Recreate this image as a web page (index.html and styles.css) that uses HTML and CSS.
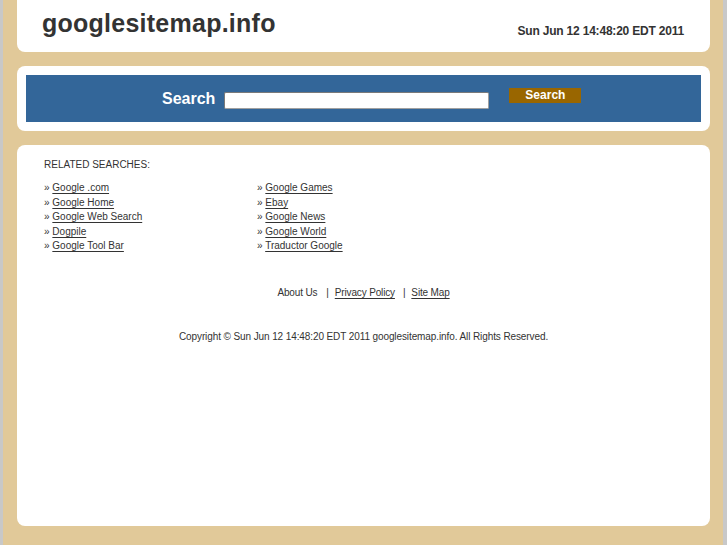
FILE: index.html
```html
<!DOCTYPE html>
<html lang="en">
<head>
  <title>googlesitemap.info</title>
  <meta charset="utf-8">
  <link rel="stylesheet" href="styles.css">
</head>
<body>
  <div class="page">
    <header class="header">
      <h1 class="logo">googlesitemap.info</h1>
      <div class="date">Sun Jun 12 14:48:20 EDT 2011</div>
    </header>

    <div class="search-box">
      <form class="search-bar">
        <label class="search-label" for="q">Search</label>
        <input class="search-input" id="q" type="text">
        <button class="search-button" type="button">Search</button>
      </form>
    </div>

    <main class="content">
      <h2 class="related-title">RELATED SEARCHES:</h2>
      <ul class="related">
        <li>&raquo; <a href="#">Google .com</a></li>
        <li>&raquo; <a href="#">Google Games</a></li>
        <li>&raquo; <a href="#">Google Home</a></li>
        <li>&raquo; <a href="#">Ebay</a></li>
        <li>&raquo; <a href="#">Google Web Search</a></li>
        <li>&raquo; <a href="#">Google News</a></li>
        <li>&raquo; <a href="#">Dogpile</a></li>
        <li>&raquo; <a href="#">Google World</a></li>
        <li>&raquo; <a href="#">Google Tool Bar</a></li>
        <li>&raquo; <a href="#">Traductor Google</a></li>
      </ul>

      <p class="footer-links">
        <span class="plain">About Us</span>
        <span class="sep sep-first">|</span>
        <a href="#">Privacy Policy</a>
        <span class="sep">|</span>
        <a href="#">Site Map</a>
      </p>
      <p class="copyright">Copyright &copy; Sun Jun 12 14:48:20 EDT 2011 googlesitemap.info. All Rights Reserved.</p>
    </main>
  </div>
</body>
</html>
```

FILE: styles.css
```css
*, *::before, *::after {
  margin: 0;
  padding: 0;
  box-sizing: border-box;
}

body {
  background-color: #C8C8C8;
  color: #333333;
  font-family: "Liberation Sans", Arial, sans-serif;
}

a {
  color: #333333;
  text-underline-offset: 2px;
}

.page {
  min-height: 545px;
  margin: 0 4px 0 3px;
  padding: 0 13px 19px 14px;
  background-color: #E1C999;
}

.header {
  display: flex;
  justify-content: space-between;
  height: 52px;
  padding: 0 26px 0 25px;
  background-color: #FFFFFF;
  border-radius: 0 0 8px 8px;
}

.logo {
  margin-top: 9px;
  font-size: 25px;
  line-height: 28px;
  font-weight: bold;
  letter-spacing: 0.25px;
  color: #333333;
}

.date {
  margin-top: 24px;
  font-size: 12px;
  line-height: 14px;
  font-weight: bold;
  letter-spacing: -0.2px;
}

.search-box {
  margin-top: 14px;
  padding: 9px;
  background-color: #FFFFFF;
  border-radius: 8px;
}

.search-bar {
  display: flex;
  align-items: flex-start;
  height: 47px;
  padding-left: 136px;
  background-color: #336699;
}

.search-label {
  margin-top: 15px;
  font-size: 16px;
  line-height: 18px;
  font-weight: bold;
  color: #FFFFFF;
}

.search-input {
  flex: none;
  width: 265px;
  height: 17px;
  margin: 17px 0 0 9px;
  border: 1px solid #7A7A7A;
  border-right-color: #A0A0A0;
  border-bottom-color: #A0A0A0;
  border-radius: 2px;
  background-color: #FFFFFF;
}

.search-button {
  flex: none;
  width: 72px;
  height: 15px;
  margin: 13px 0 0 20px;
  border: none;
  background-color: #996600;
  color: #FFFFFF;
  font-family: "Liberation Sans", Arial, sans-serif;
  font-size: 12px;
  line-height: 15px;
  font-weight: bold;
}

.content {
  height: 381px;
  margin-top: 14px;
  padding: 13px 27px 0;
  background-color: #FFFFFF;
  border-radius: 8px;
  font-size: 10px;
  line-height: 14.4px;
}

.related-title {
  margin-bottom: 9px;
  font-size: 10px;
  font-weight: normal;
}

.related {
  display: grid;
  grid-template-columns: 213px 213px;
  list-style: none;
}

.footer-links {
  display: flex;
  justify-content: center;
  margin-top: 33px;
  letter-spacing: -0.15px;
}

.footer-links .sep {
  margin: 0 6px 0 8px;
}

.footer-links .sep-first {
  margin-left: 9px;
}

.copyright {
  margin-top: 29px;
  text-align: center;
  letter-spacing: -0.1px;
}
```
